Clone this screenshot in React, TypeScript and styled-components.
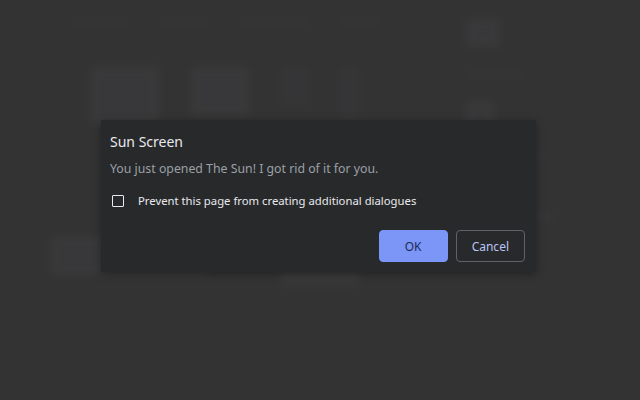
import React from 'react';
import styled, { createGlobalStyle } from 'styled-components';

const GlobalStyle = createGlobalStyle`
  html, body {
    margin: 0;
    padding: 0;
    background: #333334;
    font-family: 'Noto Sans', 'Open Sans', sans-serif;
  }
`;

const App = () => {
  return (
    <>
      <GlobalStyle />
      <Page>
        <BlurredPage>
          <MainColumn>
            <NavRow>
              <Ghost w={60} h={8} />
              <Ghost w={50} h={8} />
              <Ghost w={70} h={8} />
              <Ghost w={40} h={8} />
            </NavRow>
            <HeroRow>
              <Ghost w={70} h={60} light />
              <Ghost w={60} h={50} light />
              <Ghost w={30} h={40} />
              <Ghost w={20} h={60} />
            </HeroRow>
            <HeroRow>
              <Ghost w={160} h={40} light />
              <Ghost w={10} h={10} />
              <Ghost w={80} h={50} light />
            </HeroRow>
          </MainColumn>
          <SideColumn>
            <Ghost w={36} h={30} light />
            <Ghost w={60} h={8} />
            <Ghost w={30} h={30} light />
            <Ghost w={80} h={10} />
            <Ghost w={60} h={6} />
            <Ghost w={90} h={10} />
          </SideColumn>
        </BlurredPage>
        <Overlay>
          <Dialog>
            <Title>Sun Screen</Title>
            <Message>You just opened The Sun! I got rid of it for you.</Message>
            <CheckRow>
              <Box />
              <CheckLabel>Prevent this page from creating additional dialogues</CheckLabel>
            </CheckRow>
            <Actions>
              <Button primary>OK</Button>
              <Button>Cancel</Button>
            </Actions>
          </Dialog>
        </Overlay>
      </Page>
    </>
  );
};

export default App;

const Page = styled.div`
  position: relative;
  width: 640px;
  height: 400px;
  overflow: hidden;
  background: #333334;
`;

const BlurredPage = styled.div`
  display: grid;
  grid-template-columns: 1fr 170px;
  gap: 20px;
  padding: 18px 10px 0 30px;
  height: 100%;
  box-sizing: border-box;
  filter: blur(4px);
  opacity: 0.35;
`;

const MainColumn = styled.div`
  display: flex;
  flex-direction: column;
  gap: 40px;
`;

const NavRow = styled.div`
  display: flex;
  gap: 30px;
  padding-left: 40px;
`;

const HeroRow = styled.div`
  display: flex;
  align-items: flex-start;
  gap: 30px;
  padding-left: 60px;

  & + & {
    margin-top: 70px;
    padding-left: 20px;
  }
`;

const SideColumn = styled.div`
  display: flex;
  flex-direction: column;
  gap: 22px;
  padding-left: 5px;
`;

const Ghost = styled.div<{ w: number; h: number; light?: boolean }>`
  width: ${(p) => p.w}px;
  height: ${(p) => p.h}px;
  background: ${(p) => (p.light ? '#444446' : '#3b3b3d')};
`;

const Overlay = styled.div`
  position: absolute;
  inset: 0;
  display: flex;
  align-items: center;
  justify-content: center;
`;

const Dialog = styled.div`
  width: 435px;
  box-sizing: border-box;
  padding: 12px 11px 10px 9px;
  background: #28292b;
  border-radius: 2px;
  box-shadow: 0 2px 8px rgba(0, 0, 0, 0.35);
  display: flex;
  flex-direction: column;
  margin-left: -3px;
  margin-top: -8px;
`;

const Title = styled.div`
  font-size: 14px;
  line-height: 20px;
  color: #e8eaed;
`;

const Message = styled.div`
  margin-top: 8px;
  font-size: 12.3px;
  line-height: 18px;
  color: #9aa0a6;
`;

const CheckRow = styled.div`
  display: flex;
  align-items: center;
  gap: 14px;
  margin-top: 15px;
  padding-left: 2px;
`;

const Box = styled.div`
  width: 10px;
  height: 10px;
  border: 1.5px solid #e8eaed;
  border-radius: 1px;
`;

const CheckLabel = styled.div`
  font-size: 11.3px;
  line-height: 16px;
  color: #e8eaed;
`;

const Actions = styled.div`
  display: flex;
  justify-content: flex-end;
  gap: 8px;
  margin-top: 21px;
`;

const Button = styled.button<{ primary?: boolean }>`
  height: 32px;
  padding: 0 15px;
  box-sizing: border-box;
  border-radius: 4px;
  font-family: 'Noto Sans', 'Open Sans', sans-serif;
  font-size: 12px;
  border: 1px solid ${(p) => (p.primary ? '#7b96f6' : '#5f6368')};
  background: ${(p) => (p.primary ? '#7b96f6' : 'transparent')};
  color: ${(p) => (p.primary ? '#1f2a57' : '#b9c4f8')};
  min-width: ${(p) => (p.primary ? '69px' : '67px')};
`;
